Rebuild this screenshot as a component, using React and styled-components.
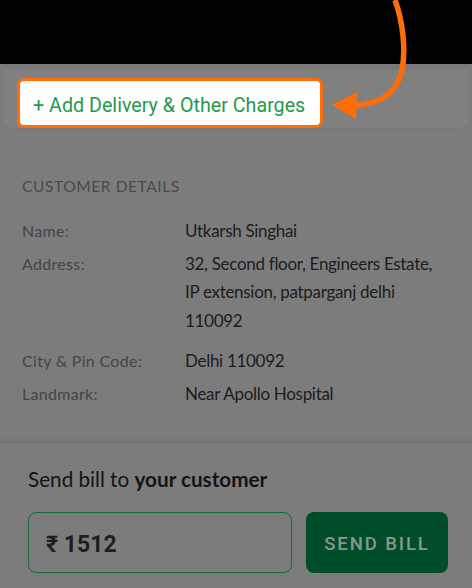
import React from 'react';
import styled, { createGlobalStyle } from 'styled-components';

const details = [
  { label: 'Name:', value: 'Utkarsh Singhai' },
  { label: 'Address:', value: '32, Second floor, Engineers Estate, IP extension, patparganj delhi 110092', spaced: true },
  { label: 'City & Pin Code:', value: 'Delhi 110092' },
  { label: 'Landmark:', value: 'Near Apollo Hospital' },
];

function App() {
  return (
    <StyledRoot>
      <GlobalStyle />
      <TopBar />
      <ChargesCard>
        <AddChargesButton>+ Add Delivery &amp; Other Charges</AddChargesButton>
      </ChargesCard>
      <Details>
        <SectionTitle>CUSTOMER DETAILS</SectionTitle>
        {details.map((d) => (
          <Row key={d.label} $spaced={d.spaced}>
            <Label>{d.label}</Label>
            <Value>{d.value}</Value>
          </Row>
        ))}
      </Details>
      <BottomSheet>
        <SheetTitle>
          Send bill to <b>your customer</b>
        </SheetTitle>
        <Actions>
          <AmountBox>₹ 1512</AmountBox>
          <SendButton>SEND BILL</SendButton>
        </Actions>
      </BottomSheet>
      <Arrow width="472" height="130" viewBox="0 0 472 130">
        <path
          d="M395 0 C403 22 406 50 402 70 C396 96 378 104 352 106"
          fill="none"
          stroke="#ff6d0a"
          strokeWidth="5.5"
        />
        <path d="M395 0 C400 14 403 28 404.5 44" fill="none" stroke="#ff6d0a" strokeWidth="2.5" />
        <polygon points="332,105 357,92 356,119" fill="#ff6d0a" />
      </Arrow>
    </StyledRoot>
  );
}

export default App;

const GlobalStyle = createGlobalStyle`
  html, body {
    margin: 0;
    padding: 0;
    background: #7c7c7c;
  }
  body {
    font-family: Lato, "Open Sans", "Liberation Sans", sans-serif;
  }
`;

const StyledRoot = styled.div`
  position: relative;
  width: 472px;
  height: 588px;
  overflow: hidden;
  background: #7c7c7c;
  display: flex;
  flex-direction: column;
`;

const TopBar = styled.div`
  height: 64px;
  background: #000;
  flex-shrink: 0;
`;

const ChargesCard = styled.div`
  margin: 0 4px;
  height: 65px;
  background: #808080;
  border-top: 6px solid #7a7a7a;
  border-bottom: 1px solid #777;
  border-radius: 0 0 8px 8px;
  box-sizing: border-box;
  padding: 8px 0 0 13px;
`;

const AddChargesButton = styled.div`
  width: 306px;
  height: 50px;
  box-sizing: border-box;
  border: 3px solid #ff6d0a;
  border-radius: 7px;
  background: #fff;
  color: #1f9a4b;
  font-family: Roboto, "Liberation Sans", sans-serif;
  font-size: 19.7px;
  display: flex;
  align-items: center;
  padding: 4px 0 0 13px;
`;

const Details = styled.div`
  padding: 48px 22px 0 22px;
  flex: 1;
`;

const SectionTitle = styled.div`
  font-size: 15.5px;
  color: #4a4a4a;
  letter-spacing: 0.6px;
  margin-bottom: 22px;
`;

const Row = styled.div`
  display: grid;
  grid-template-columns: 163px 1fr;
  margin-bottom: ${(p) => (p.$spaced ? '12px' : '4px')};
  line-height: 28.5px;
`;

const Label = styled.div`
  font-size: 16px;
  color: #454545;
  letter-spacing: 0.3px;
`;

const Value = styled.div`
  font-size: 17px;
  color: #1c1c1c;
  letter-spacing: -0.3px;
`;

const BottomSheet = styled.div`
  height: 145px;
  background: #7c7c7c;
  box-shadow: 0 -2px 4px rgba(0, 0, 0, 0.12);
  padding: 24px 24px 0 28px;
  box-sizing: border-box;
`;

const SheetTitle = styled.div`
  font-size: 20.7px;
  color: #141414;
  margin-bottom: 21px;

  b {
    font-weight: 700;
  }
`;

const Actions = styled.div`
  display: flex;
  gap: 14px;
`;

const AmountBox = styled.div`
  width: 264px;
  height: 61px;
  box-sizing: border-box;
  border: 1px solid #166b3b;
  border-radius: 8px;
  display: flex;
  align-items: center;
  padding: 3px 0 0 17px;
  font-family: Roboto, "Liberation Sans", sans-serif;
  font-size: 23px;
  font-weight: 700;
  color: #1e1e1e;
`;

const SendButton = styled.div`
  width: 142px;
  height: 61px;
  box-sizing: border-box;
  padding-top: 3px;
  border-radius: 8px;
  background: #004d29;
  color: #8a968d;
  font-family: Roboto, "Liberation Sans", sans-serif;
  font-size: 18.5px;
  font-weight: 500;
  letter-spacing: 1.9px;
  display: flex;
  align-items: center;
  justify-content: center;
`;

const Arrow = styled.svg`
  position: absolute;
  left: 0;
  top: 0;
  pointer-events: none;
`;
